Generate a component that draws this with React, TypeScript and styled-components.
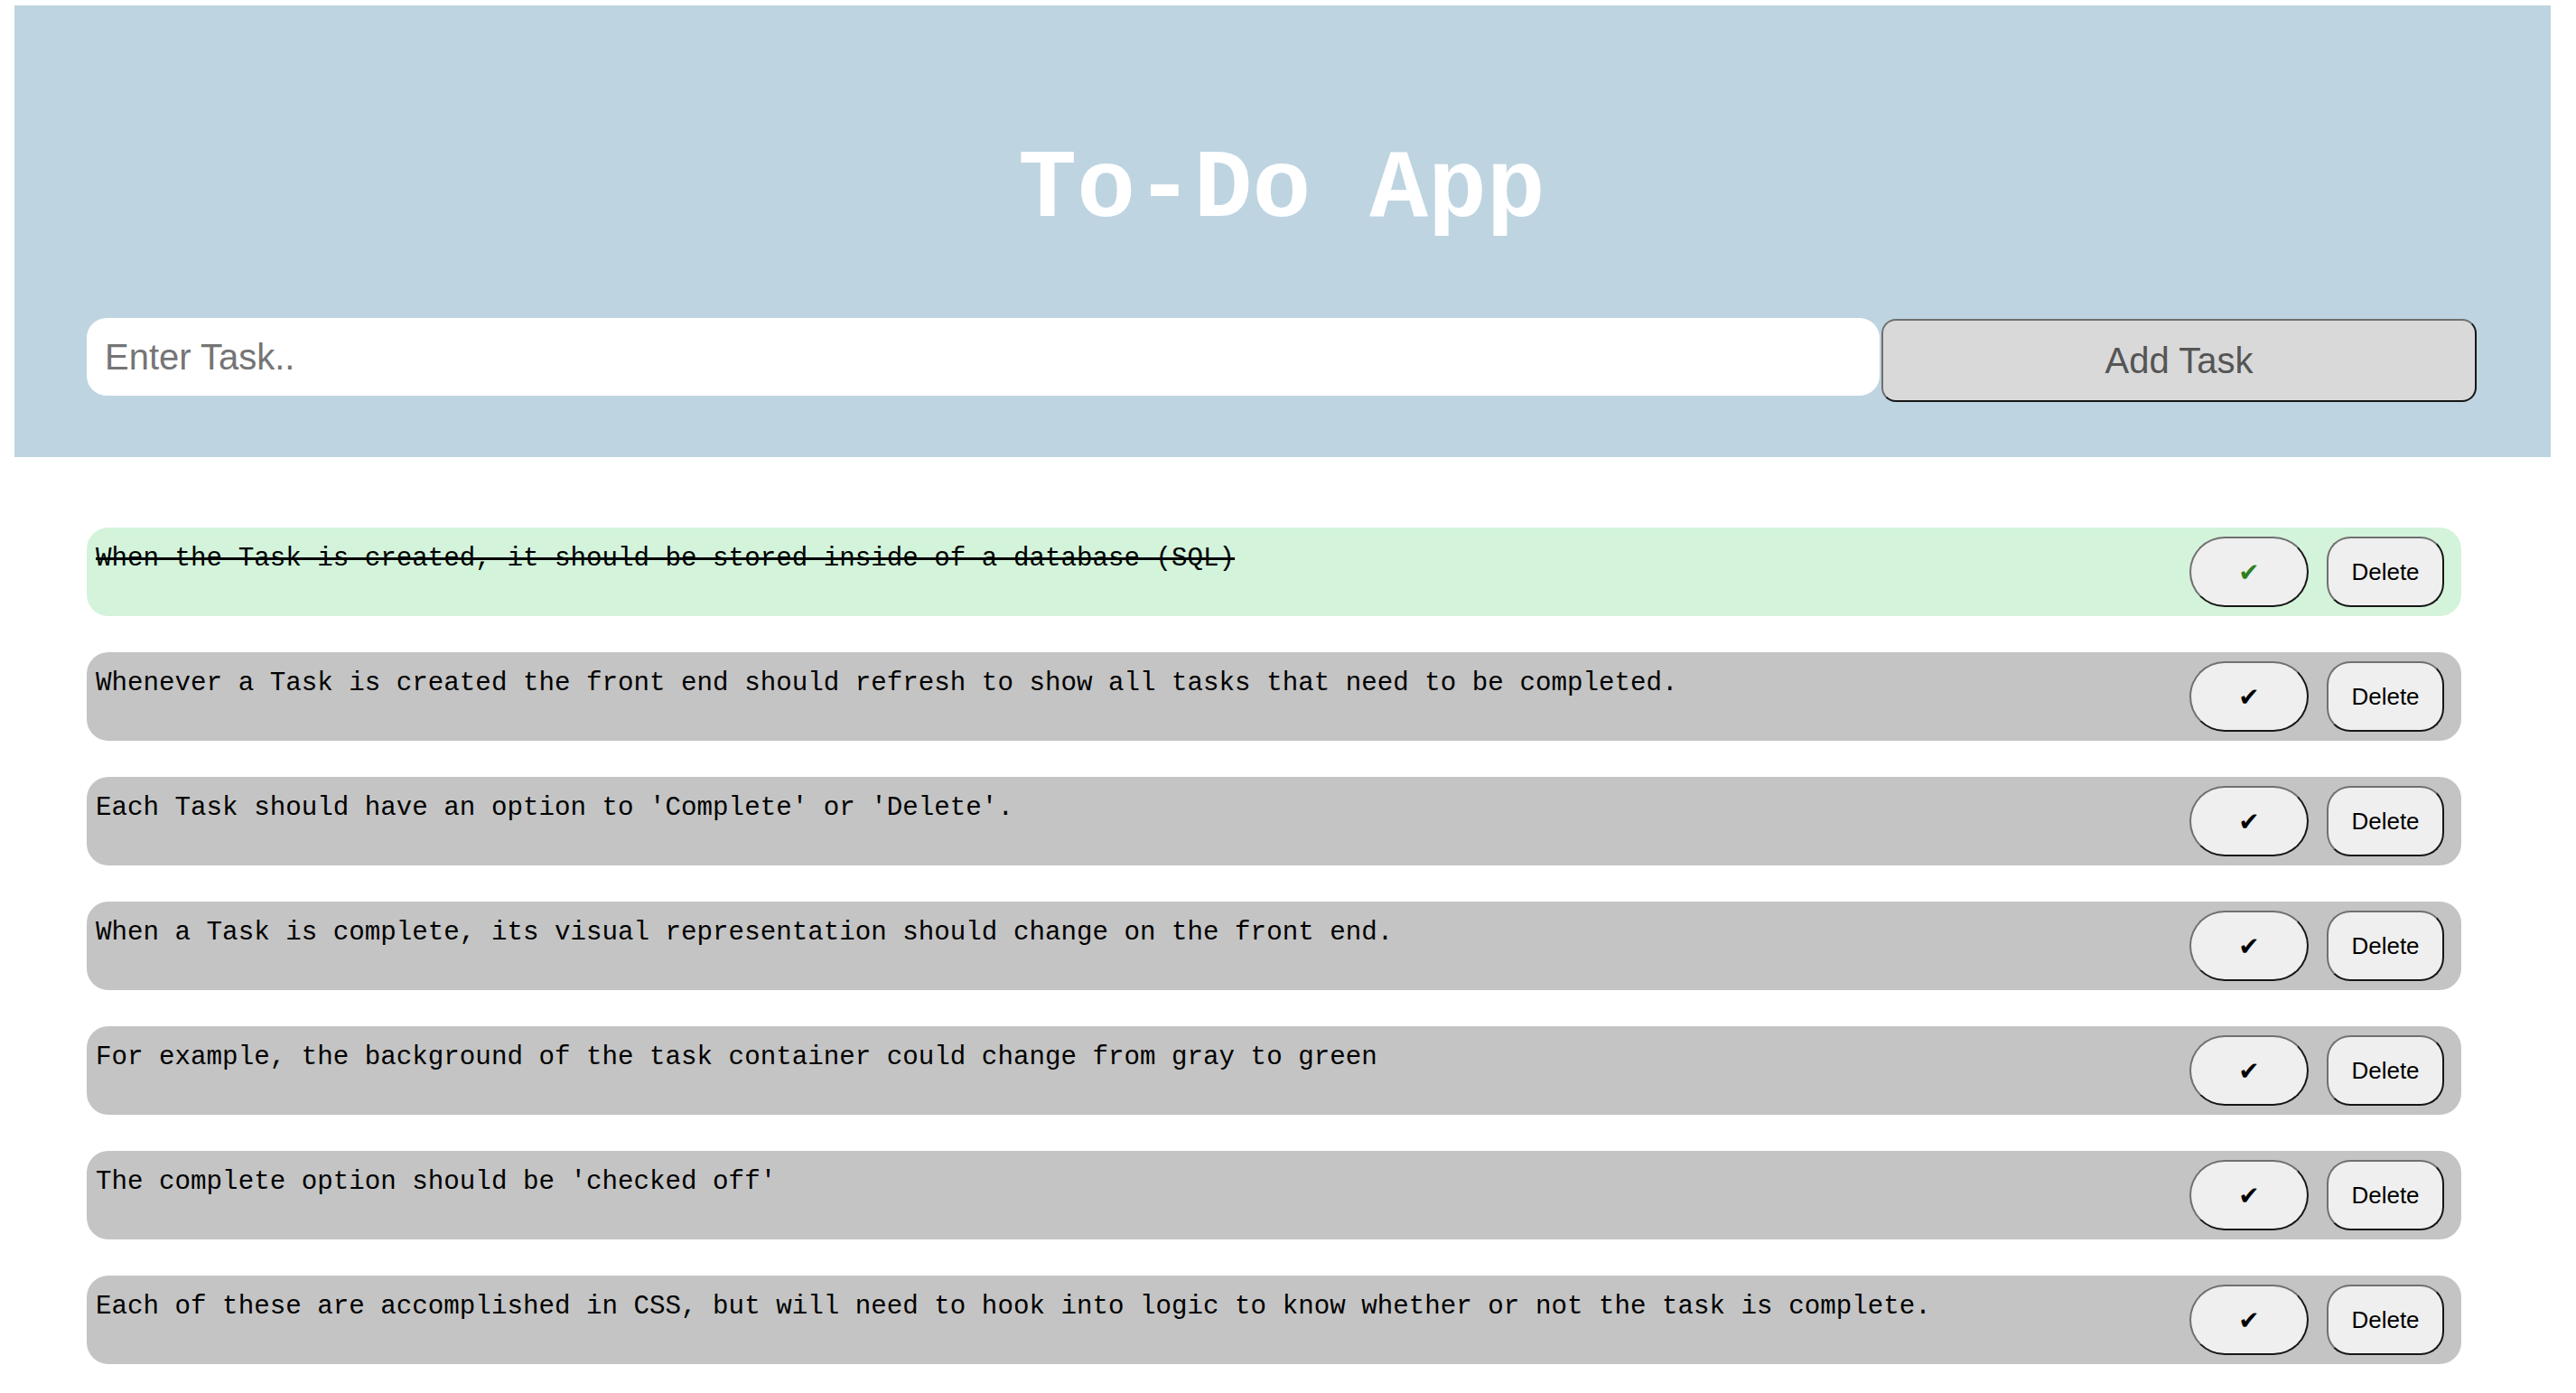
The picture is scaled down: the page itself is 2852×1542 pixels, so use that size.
import React, { useState } from "react";
import styled, { createGlobalStyle } from "styled-components";

const GlobalStyle = createGlobalStyle`
  html, body { margin: 0; padding: 0; background: #ffffff; }
  body { font-family: "Liberation Sans", Arial, sans-serif; }
`;

const Page = styled.div`
  padding: 6px 28px 32px 16px;
`;

const Header = styled.header`
  background: #bed4e1;
  height: 500px;
  box-sizing: border-box;
  padding: 150px 82px 0 80px;
  display: flex;
  flex-direction: column;
`;

const Title = styled.h1`
  margin: 0;
  text-align: center;
  color: #ffffff;
  font-family: "Liberation Mono", "Courier New", monospace;
  font-weight: 700;
  font-size: 108px;
  line-height: 1;
`;

const InputRow = styled.div`
  margin-top: 88px;
  display: flex;
  align-items: flex-start;
  gap: 2px;
`;

const TaskInput = styled.input`
  flex: 1;
  height: 86px;
  box-sizing: border-box;
  border: none;
  outline: none;
  border-radius: 22px;
  background: #ffffff;
  padding: 0 20px;
  font-family: "Liberation Sans", Arial, sans-serif;
  font-size: 40px;
  color: #222;
  &::placeholder { color: #757575; }
`;

const AddButton = styled.button`
  width: 659px;
  height: 92px;
  margin-top: 1px;
  box-sizing: border-box;
  background: #d9d9d9;
  border: 2px solid;
  border-color: #707070 #161616 #161616 #707070;
  border-radius: 16px;
  font-family: "Liberation Sans", Arial, sans-serif;
  font-size: 40px;
  color: #555555;
  cursor: pointer;
`;

const List = styled.ul`
  list-style: none;
  margin: 78px 0 0 0;
  padding: 0 99px 0 80px;
  display: flex;
  flex-direction: column;
  gap: 40px;
`;

const Row = styled.li<{ $done: boolean }>`
  height: 98px;
  box-sizing: border-box;
  border-radius: 24px;
  background: ${(p) => (p.$done ? "#d3f3db" : "#c4c4c4")};
  padding: 18px 19px 0 10px;
  display: flex;
  align-items: flex-start;
  justify-content: space-between;
`;

const TaskText = styled.span<{ $done: boolean }>`
  font-family: "Liberation Mono", "Courier New", monospace;
  font-size: 29.2px;
  line-height: normal;
  color: #000;
  text-decoration: ${(p) => (p.$done ? "line-through" : "none")};
  text-decoration-thickness: 3px;
`;

const Actions = styled.div`
  display: flex;
  gap: 20px;
  align-self: center;
  margin-top: -18px;
`;

const RowButton = styled.button<{ $pill?: boolean }>`
  height: 78px;
  width: ${(p) => (p.$pill ? "132px" : "130px")};
  box-sizing: border-box;
  background: #efefef;
  border: 2px solid;
  border-color: #707070 #161616 #161616 #707070;
  border-radius: ${(p) => (p.$pill ? "40px" : "26px")};
  font-family: "Liberation Sans", Arial, sans-serif;
  font-size: 26px;
  color: #000;
  padding: 0;
  cursor: pointer;
`;

const Check = styled.span<{ $done: boolean }>`
  font-family: "DejaVu Sans", sans-serif;
  font-size: 28px;
  color: ${(p) => (p.$done ? "#2f7f1f" : "#000")};
`;

const initialTasks = [
  { text: "When the Task is created, it should be stored inside of a database (SQL)", done: true },
  { text: "Whenever a Task is created the front end should refresh to show all tasks that need to be completed.", done: false },
  { text: "Each Task should have an option to 'Complete' or 'Delete'.", done: false },
  { text: "When a Task is complete, its visual representation should change on the front end.", done: false },
  { text: "For example, the background of the task container could change from gray to green", done: false },
  { text: "The complete option should be 'checked off'", done: false },
  { text: "Each of these are accomplished in CSS, but will need to hook into logic to know whether or not the task is complete.", done: false },
];

export default function App() {
  const [tasks, setTasks] = useState(initialTasks);
  const [value, setValue] = useState("");

  const add = () => {
    if (!value.trim()) return;
    setTasks([...tasks, { text: value.trim(), done: false }]);
    setValue("");
  };

  return (
    <Page>
      <GlobalStyle />
      <Header>
        <Title>To-Do App</Title>
        <InputRow>
          <TaskInput
            placeholder="Enter Task.."
            value={value}
            onChange={(e) => setValue(e.target.value)}
          />
          <AddButton onClick={add}>Add Task</AddButton>
        </InputRow>
      </Header>
      <List>
        {tasks.map((t, i) => (
          <Row key={i} $done={t.done}>
            <TaskText $done={t.done}>{t.text}</TaskText>
            <Actions>
              <RowButton
                $pill
                onClick={() =>
                  setTasks(tasks.map((x, j) => (j === i ? { ...x, done: !x.done } : x)))
                }
              >
                <Check $done={t.done}>✔</Check>
              </RowButton>
              <RowButton onClick={() => setTasks(tasks.filter((_, j) => j !== i))}>
                Delete
              </RowButton>
            </Actions>
          </Row>
        ))}
      </List>
    </Page>
  );
}
